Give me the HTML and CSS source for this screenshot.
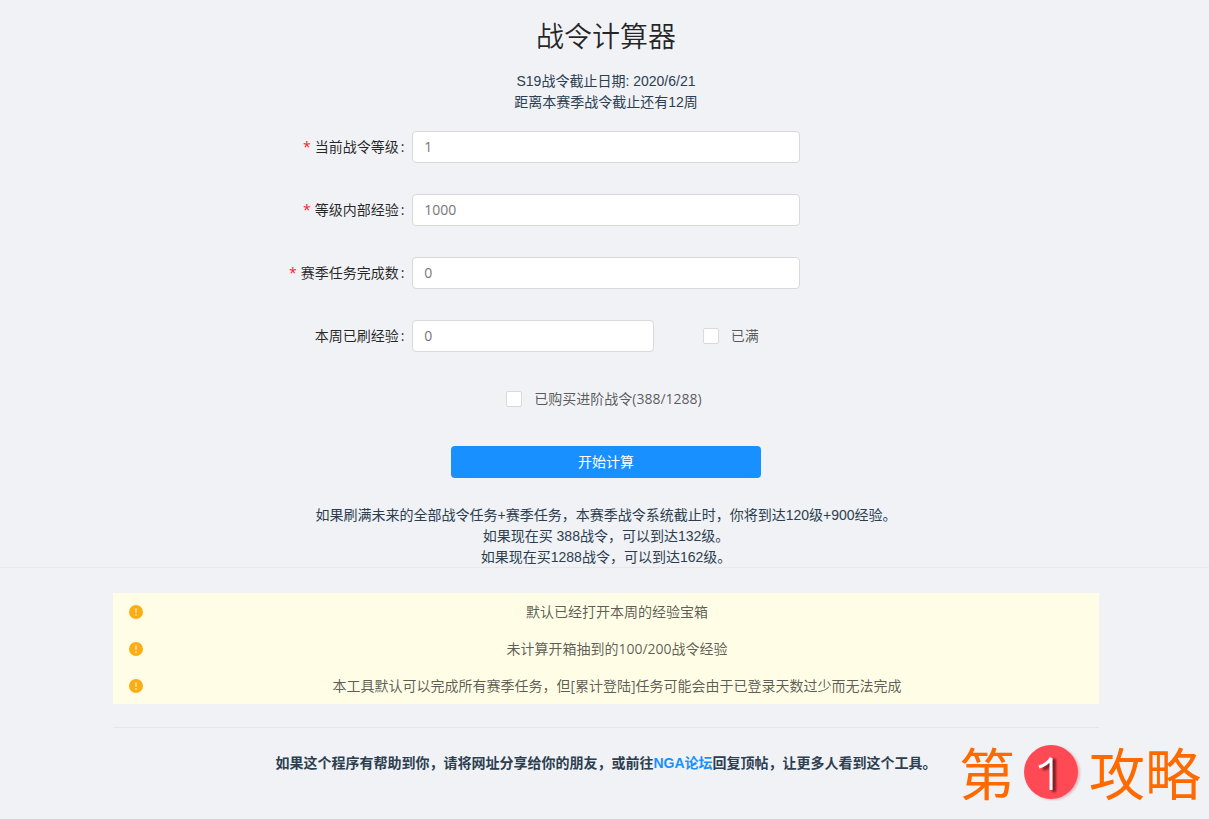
FILE: index.html
```html
<!DOCTYPE html>
<html lang="zh-CN">
<head>
<meta charset="utf-8">
<title>战令计算器</title>
<link rel="stylesheet" href="styles.css">
</head>
<body>
<main class="page">
  <h1 class="title">战令计算器</h1>
  <p class="lines intro">S19战令截止日期: 2020/6/21<br>距离本赛季战令截止还有12周</p>

  <form class="form">
    <div class="row">
      <label class="label required" for="level">当前战令等级</label>
      <input class="input" id="level" type="text" placeholder="1">
    </div>
    <div class="row">
      <label class="label required" for="exp">等级内部经验</label>
      <input class="input" id="exp" type="text" placeholder="1000">
    </div>
    <div class="row">
      <label class="label required" for="tasks">赛季任务完成数</label>
      <input class="input" id="tasks" type="text" placeholder="0">
    </div>
    <div class="row">
      <label class="label" for="week">本周已刷经验</label>
      <input class="input input-short" id="week" type="text" placeholder="0">
      <label class="check check-full"><input class="box" type="checkbox"><span class="check-text">已满</span></label>
    </div>
    <div class="row row-center">
      <label class="check"><input class="box" type="checkbox"><span class="check-text">已购买进阶战令(388/1288)</span></label>
    </div>
    <div class="row row-center">
      <button class="submit" type="button">开始计算</button>
    </div>
  </form>

  <p class="lines result">如果刷满未来的全部战令任务+赛季任务，本赛季战令系统截止时，你将到达120级+900经验。<br>如果现在买 388战令，可以到达132级。<br>如果现在买1288战令，可以到达162级。</p>
</main>

<footer class="footer">
  <ul class="notices">
    <li class="notice">
      <svg class="icon" viewBox="0 0 14 14" aria-hidden="true"><circle cx="7" cy="7" r="7" fill="#faad14"/><path d="M7 3.2v4.6" stroke="#fffbe6" stroke-width="1"/><circle cx="7" cy="10" r=".8" fill="#fffbe6"/></svg>
      <span class="notice-text">默认已经打开本周的经验宝箱</span>
    </li>
    <li class="notice">
      <svg class="icon" viewBox="0 0 14 14" aria-hidden="true"><circle cx="7" cy="7" r="7" fill="#faad14"/><path d="M7 3.2v4.6" stroke="#fffbe6" stroke-width="1"/><circle cx="7" cy="10" r=".8" fill="#fffbe6"/></svg>
      <span class="notice-text">未计算开箱抽到的100/200战令经验</span>
    </li>
    <li class="notice">
      <svg class="icon" viewBox="0 0 14 14" aria-hidden="true"><circle cx="7" cy="7" r="7" fill="#faad14"/><path d="M7 3.2v4.6" stroke="#fffbe6" stroke-width="1"/><circle cx="7" cy="10" r=".8" fill="#fffbe6"/></svg>
      <span class="notice-text">本工具默认可以完成所有赛季任务，但[累计登陆]任务可能会由于已登录天数过少而无法完成</span>
    </li>
  </ul>
  <p class="lines share">如果这个程序有帮助到你，请将网址分享给你的朋友，或前往<a class="link" href="#">NGA论坛</a>回复顶帖，让更多人看到这个工具。</p>
</footer>

<div class="watermark">
  <span>第</span>
  <svg class="badge" viewBox="0 0 60 60" role="img" aria-label="1">
    <defs>
      <filter id="soft" x="-30%" y="-30%" width="160%" height="160%"><feGaussianBlur stdDeviation="1"/></filter>
    </defs>
    <circle cx="31" cy="32" r="27" fill="#d9a3ab" opacity=".7" filter="url(#soft)"/>
    <circle cx="29" cy="31" r="27" fill="#ff4a55"/>
    <path d="M21 28q8-3 11-10v33" fill="none" stroke="#7c1c28" stroke-width="4" filter="url(#soft)"/>
    <path d="M17 26q9-3 12-9v32" fill="none" stroke="#fff" stroke-width="3"/>
  </svg>
  <span>攻略</span>
</div>
</body>
</html>
```
FILE: styles.css
```css
* { box-sizing: border-box; }

body {
  margin: 0;
  min-height: 100vh;
  background: #f0f2f5;
  color: rgba(0, 0, 0, .65);
  font: 14px/21px "Open Sans", "Noto Sans CJK SC", sans-serif;
}

.page { padding: 14px 22px 0 25px; }

.title {
  margin: 0 0 15px;
  color: rgba(0, 0, 0, .85);
  font-family: "Noto Sans CJK SC", sans-serif;
  font-size: 28px;
  font-weight: 350;
  line-height: 42px;
  text-align: center;
}

.lines {
  margin: 0;
  color: #2c3e50;
  font-family: "Liberation Sans", "Noto Sans CJK SC", sans-serif;
  text-align: center;
}

.form {
  display: grid;
  gap: 31px;
  margin: 18px 0 27px;
}

.result { margin-bottom: -1px; }

.row {
  display: grid;
  grid-template-columns: repeat(24, minmax(0, 1fr));
  align-items: center;
  height: 32px;
}

.row-center {
  display: flex;
  justify-content: center;
}

.label {
  grid-column: 1 / span 8;
  padding: 0 8px 2px 0;
  color: rgba(0, 0, 0, .85);
  text-align: right;
}

.label::after {
  content: ":";
  margin-left: 2px;
}

.required::before {
  content: "*";
  margin-right: 4px;
  color: #f5222d;
}

.input {
  grid-column: 9 / span 8;
  width: 100%;
  height: 32px;
  padding: 3px 11px 5px;
  border: 1px solid #d9d9d9;
  border-radius: 4px;
  background: #fff;
  color: inherit;
  font: inherit;
}

.input::placeholder { color: #777; opacity: 1; }

.input-short { grid-column: 9 / span 5; }

.check {
  display: flex;
  align-items: center;
  gap: 12px;
}

.check-full { grid-column: 15 / span 4; }

.check-text { padding: 0 4px 2px 0; }

.box {
  appearance: none;
  width: 16px;
  height: 16px;
  margin: 0;
  border: 1px solid #d9d9d9;
  border-radius: 2px;
  background: #fff;
}

.box:checked {
  border-color: #1890ff;
  background: #1890ff;
}

.submit {
  width: 310px;
  height: 32px;
  padding: 0 0 2px;
  border: 0;
  border-radius: 4px;
  background: #1890ff;
  color: #fff;
  font: inherit;
}

.footer {
  padding: 25px 22px 44px 25px;
  border-top: 1px solid #e8e8ec;
}

.notices {
  margin: 0 88px 23px;
  padding: 0;
  background: #fffde6;
  list-style: none;
}

.notice {
  display: flex;
  align-items: center;
  gap: 7px;
  padding: 8px 15px 8px 16px;
}

.icon {
  flex: none;
  width: 14px;
  height: 14px;
}

.notice-text {
  flex: 1;
  text-align: center;
}

.share {
  margin: 0 88px;
  padding-top: 25px;
  border-top: 1px solid #e4e6ea;
  font-weight: 700;
}

.link {
  color: #1890ff;
  text-decoration: none;
}

.watermark {
  position: absolute;
  right: 8px;
  bottom: 16px;
  display: flex;
  align-items: center;
  gap: 7px;
  color: #ff6a00;
  font: 400 56px/64px "Noto Sans CJK SC", sans-serif;
}

.badge {
  width: 60px;
  height: 60px;
}
```
